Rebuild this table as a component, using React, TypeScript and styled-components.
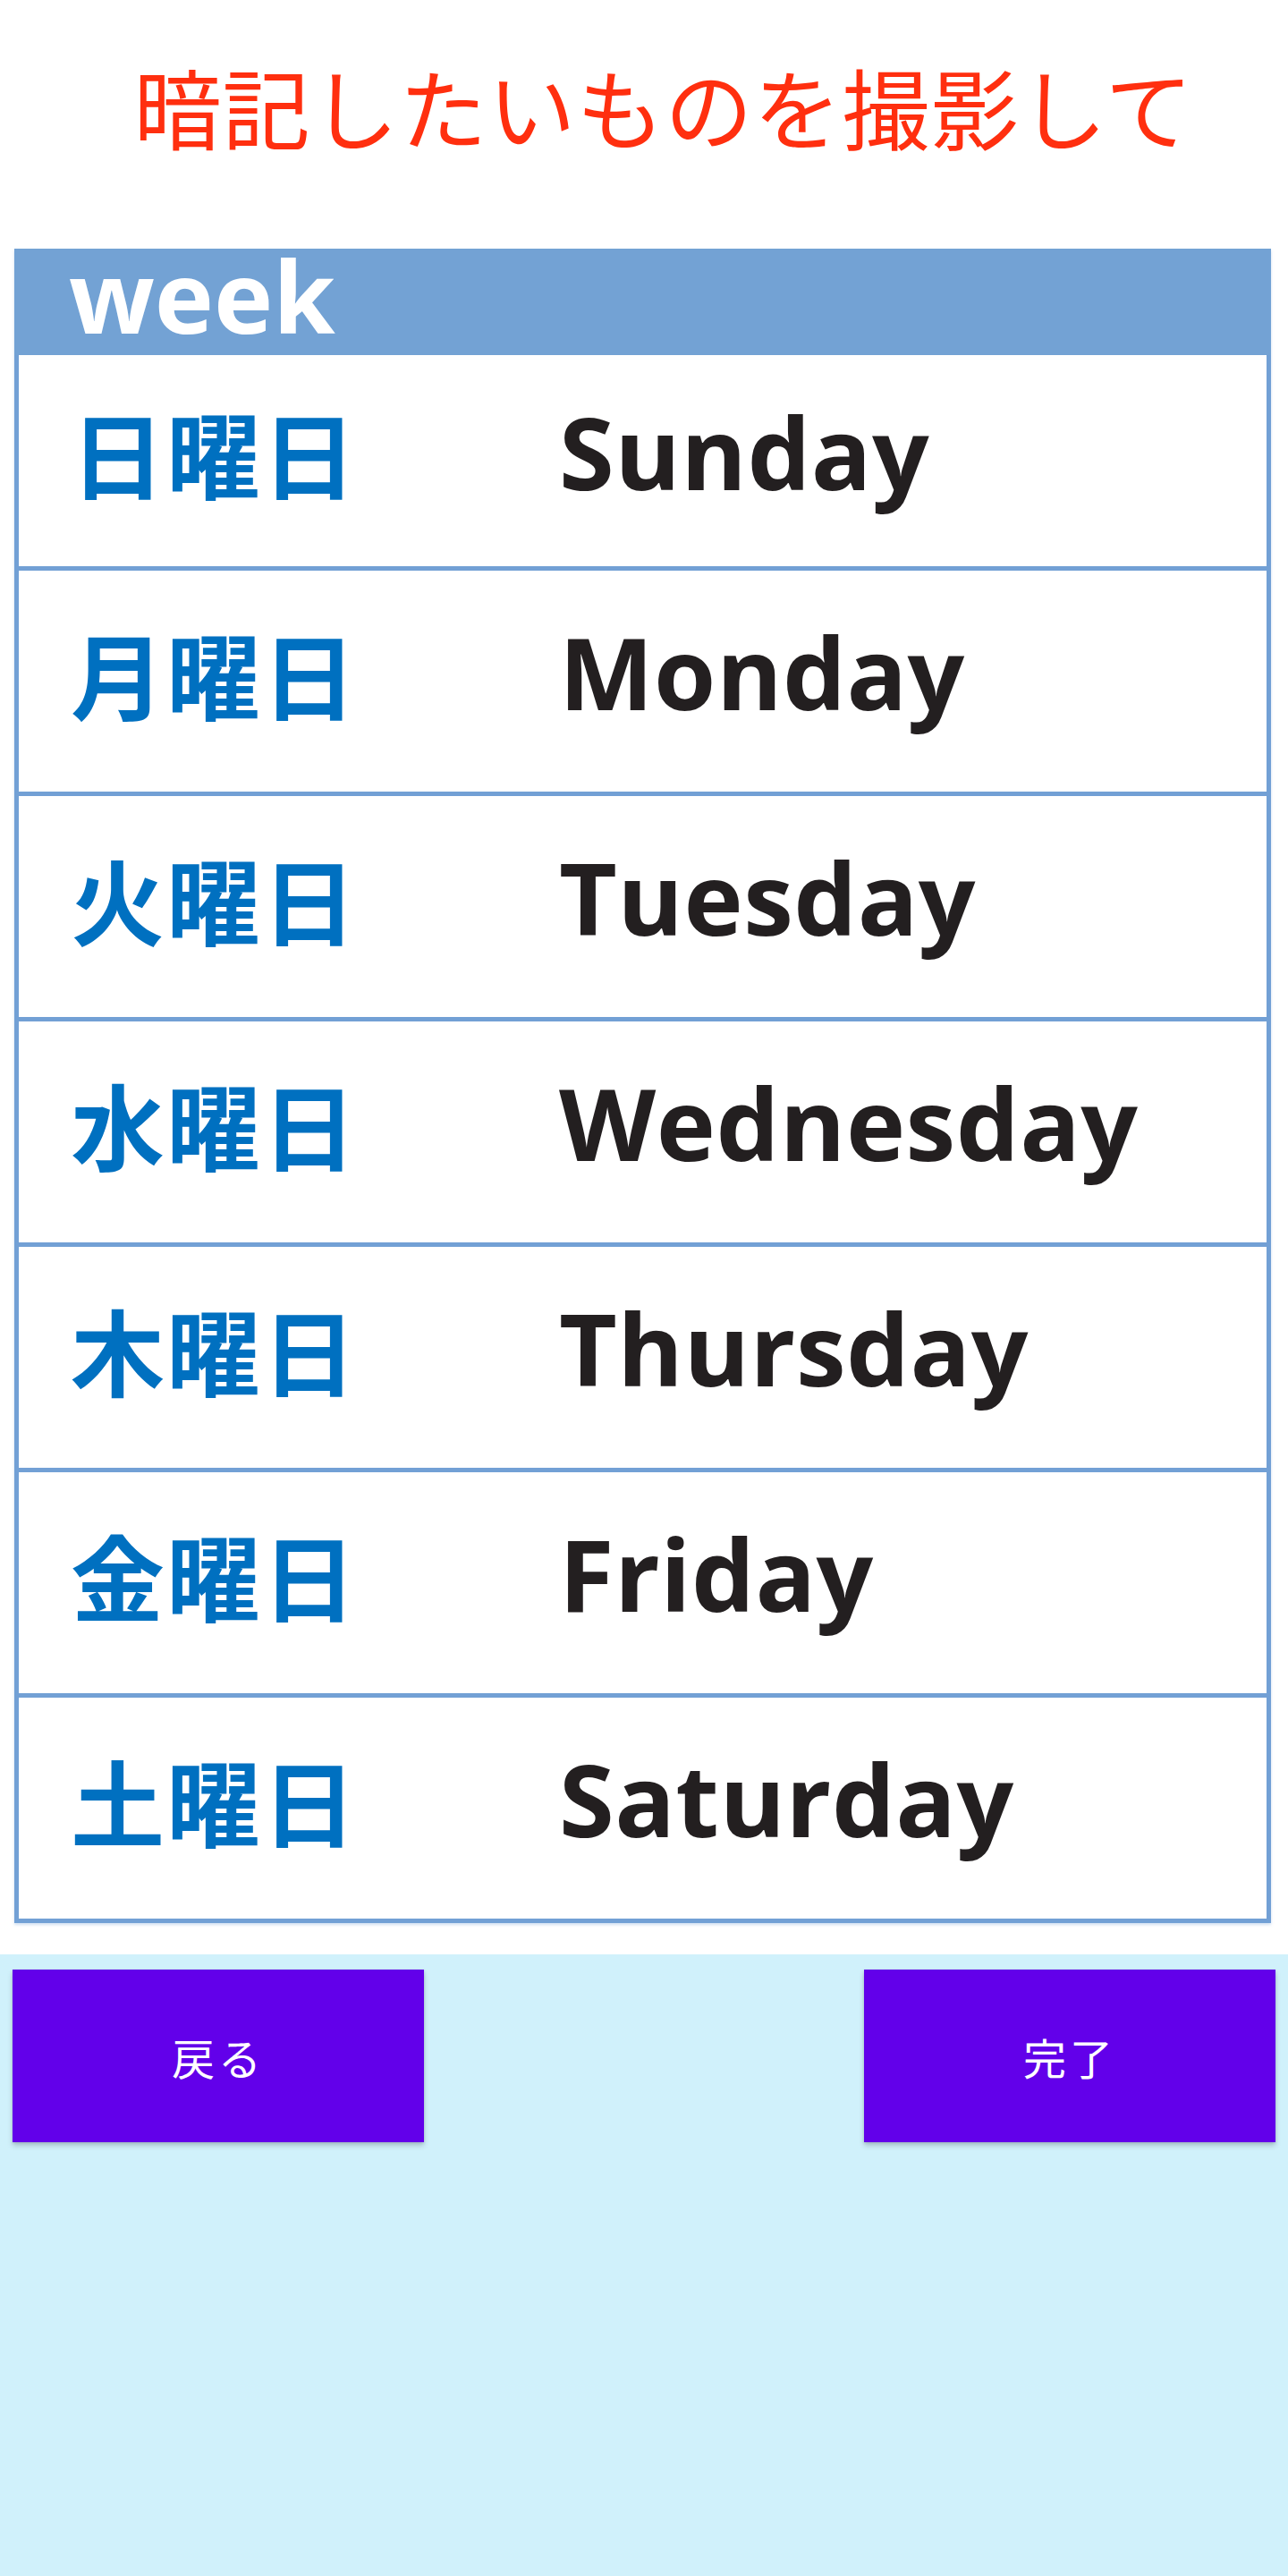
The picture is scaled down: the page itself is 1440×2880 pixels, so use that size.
import React from "react";
import styled, { createGlobalStyle } from "styled-components";

const GlobalStyle = createGlobalStyle`
  html, body {
    margin: 0;
    padding: 0;
    background: #ffffff;
  }
  * { box-sizing: border-box; }
`;

const Page = styled.div`
  display: flex;
  flex-direction: column;
  min-height: 100vh;
  background: #ffffff;
`;

const Top = styled.section`
  background: #ffffff;
  padding-bottom: 35px;
`;

const Title = styled.h1`
  margin: 0;
  padding: 58px 0 102px 44px;
  text-align: center;
  font-family: "Noto Sans CJK JP", "Noto Sans", sans-serif;
  font-weight: 400;
  font-size: 98px;
  line-height: 118px;
  letter-spacing: 1px;
  color: #ff2f0f;
  white-space: nowrap;
`;

const Card = styled.div`
  margin: 0 19px 0 16px;
  border: 5px solid #72a0d5;
  border-top: none;
  background: #ffffff;
  box-shadow: 0 2px 3px rgba(120, 163, 214, 0.35);
`;

const CardHeader = styled.div`
  height: 119px;
  margin: 0 -5px;
  padding: 2px 0 0 61px;
  background: #73a2d4;
  font-family: "Open Sans", "Noto Sans", sans-serif;
  font-weight: 700;
  font-size: 112px;
  line-height: 100px;
  color: #ffffff;
`;

const Row = styled.div<{ $first?: boolean }>`
  display: grid;
  grid-template-columns: 604px 1fr;
  align-items: center;
  height: ${(p) => (p.$first ? "236px" : "252px")};
  padding-bottom: 21px;
  border-top: ${(p) => (p.$first ? "none" : "5px solid #72a0d5")};
`;

const Jp = styled.div`
  padding-left: 58px;
  font-family: "Noto Sans CJK JP", sans-serif;
  font-weight: 700;
  font-size: 105px;
  line-height: 1;
  letter-spacing: 2px;
  color: #0070c0;
  white-space: nowrap;
`;

const En = styled.div`
  font-family: "Open Sans", "Noto Sans", sans-serif;
  font-weight: 700;
  font-size: 112px;
  line-height: 1;
  letter-spacing: 0.5px;
  color: #231f20;
  white-space: nowrap;
`;

const Bottom = styled.section`
  flex: 1;
  background: #d0f1fb;
  padding: 17px 14px;
`;

const ButtonRow = styled.div`
  display: flex;
  justify-content: space-between;
`;

const ActionButton = styled.button`
  width: 460px;
  height: 193px;
  border: none;
  border-radius: 0;
  background: #6200ea;
  color: #ffffff;
  font-family: "Noto Sans CJK JP", "Roboto", sans-serif;
  font-weight: 400;
  font-size: 48px;
  letter-spacing: 4px;
  box-shadow: 0 4px 6px rgba(0, 0, 0, 0.18), 0 1px 3px rgba(0, 0, 0, 0.12);
  cursor: pointer;
`;

const days: [string, string][] = [
  ["日曜日", "Sunday"],
  ["月曜日", "Monday"],
  ["火曜日", "Tuesday"],
  ["水曜日", "Wednesday"],
  ["木曜日", "Thursday"],
  ["金曜日", "Friday"],
  ["土曜日", "Saturday"],
];

export default function App() {
  return (
    <>
      <GlobalStyle />
      <Page>
        <Top>
          <Title>暗記したいものを撮影して</Title>
          <Card>
            <CardHeader>week</CardHeader>
            {days.map(([jp, en], i) => (
              <Row key={en} $first={i === 0}>
                <Jp>{jp}</Jp>
                <En>{en}</En>
              </Row>
            ))}
          </Card>
        </Top>
        <Bottom>
          <ButtonRow>
            <ActionButton>戻る</ActionButton>
            <ActionButton>完了</ActionButton>
          </ButtonRow>
        </Bottom>
      </Page>
    </>
  );
}
